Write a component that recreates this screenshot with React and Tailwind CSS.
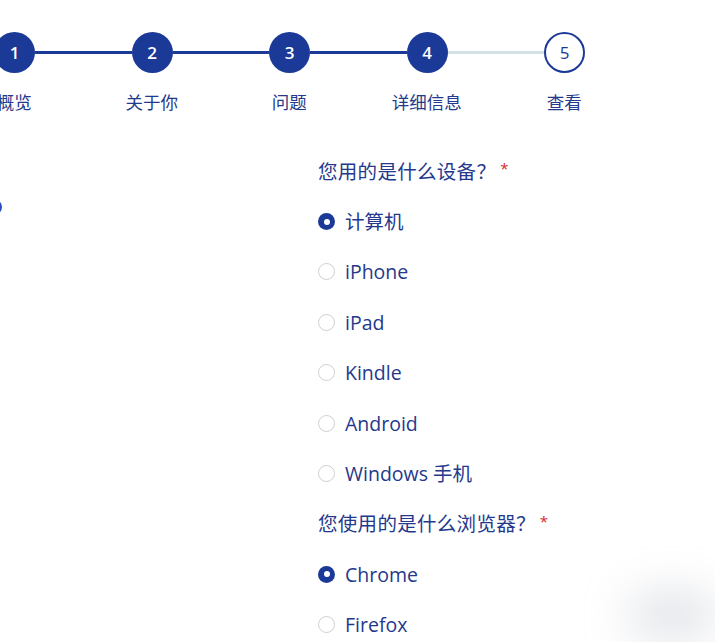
import React from "react";

const steps = [
  { n: 1, label: "概览", done: true },
  { n: 2, label: "关于你", done: true },
  { n: 3, label: "问题", done: true },
  { n: 4, label: "详细信息", done: true },
  { n: 5, label: "查看", done: false },
];

const questions = [
  {
    q: "您用的是什么设备？",
    options: ["计算机", "iPhone", "iPad", "Kindle", "Android", "Windows 手机"],
    selected: 0,
  },
  {
    q: "您使用的是什么浏览器？",
    options: ["Chrome", "Firefox"],
    selected: 0,
  },
];

const font = {
  fontFamily: '"Open Sans", "Noto Sans CJK SC", sans-serif',
};

function Radio({ checked }) {
  if (checked) {
    return (
      <span className="w-[17px] h-[17px] rounded-full bg-[#1b3a98] flex items-center justify-center shrink-0">
        <span className="w-[6px] h-[6px] rounded-full bg-white" />
      </span>
    );
  }
  return <span className="w-[17px] h-[17px] rounded-full border-[1.5px] border-[#cfcfcf] bg-white shrink-0" />;
}

export default function App() {
  return (
    <div className="relative w-[715px] h-[642px] overflow-hidden bg-white text-[#24398c]" style={font}>
      {/* Stepper */}
      <div className="flex items-center ml-[-6px] pt-[32px]">
        {steps.map((s, i) => (
          <React.Fragment key={s.n}>
            {s.done ? (
              <div className="w-[41px] h-[41px] rounded-full bg-[#1b3a98] text-white flex items-center justify-center text-[17px] font-semibold shrink-0">
                {s.n}
              </div>
            ) : (
              <div className="w-[41px] h-[41px] rounded-full border-2 border-[#1b3a98] bg-white text-[#1b3a98] flex items-center justify-center text-[17px] shrink-0">
                {s.n}
              </div>
            )}
            {i < steps.length - 1 && (
              <div className={`w-[96.5px] h-[3px] shrink-0 ${i < 3 ? "bg-[#1b3a98]" : "bg-[#d3e0e6]"}`} />
            )}
          </React.Fragment>
        ))}
      </div>
      <div className="flex ml-[-54.5px] mt-[17px]">
        {steps.map((s) => (
          <div key={s.n} className="w-[137.5px] shrink-0 text-center text-[17.5px] leading-6">
            {s.label}
          </div>
        ))}
      </div>

      {/* Form */}
      <div className="flex mt-[32px]">
        <div className="w-[318px] shrink-0">
          <div className="ml-[-14px] mt-[53px] w-[16px] h-[16px] rounded-full border-2 border-[#2a4fc0]" />
        </div>
        <div className="flex flex-col">
          {questions.map((g) => (
            <React.Fragment key={g.q}>
              <div className="h-[50.4px] flex items-center text-[19.5px] tracking-[0.3px]">
                {g.q}
                <span className="text-[#d8262b] text-[15px] ml-[4px] mt-[-6px]">*</span>
              </div>
              {g.options.map((o, i) => (
                <div key={o} className="h-[50.4px] flex items-center gap-[10px] text-[19.5px]">
                  <Radio checked={i === g.selected} />
                  <span>{o}</span>
                </div>
              ))}
            </React.Fragment>
          ))}
        </div>
      </div>

      {/* floating button shadow */}
      <div className="absolute left-[630px] top-[598px] w-[85px] h-[34px] rounded-full bg-gray-400/40 blur-xl" />
    </div>
  );
}
